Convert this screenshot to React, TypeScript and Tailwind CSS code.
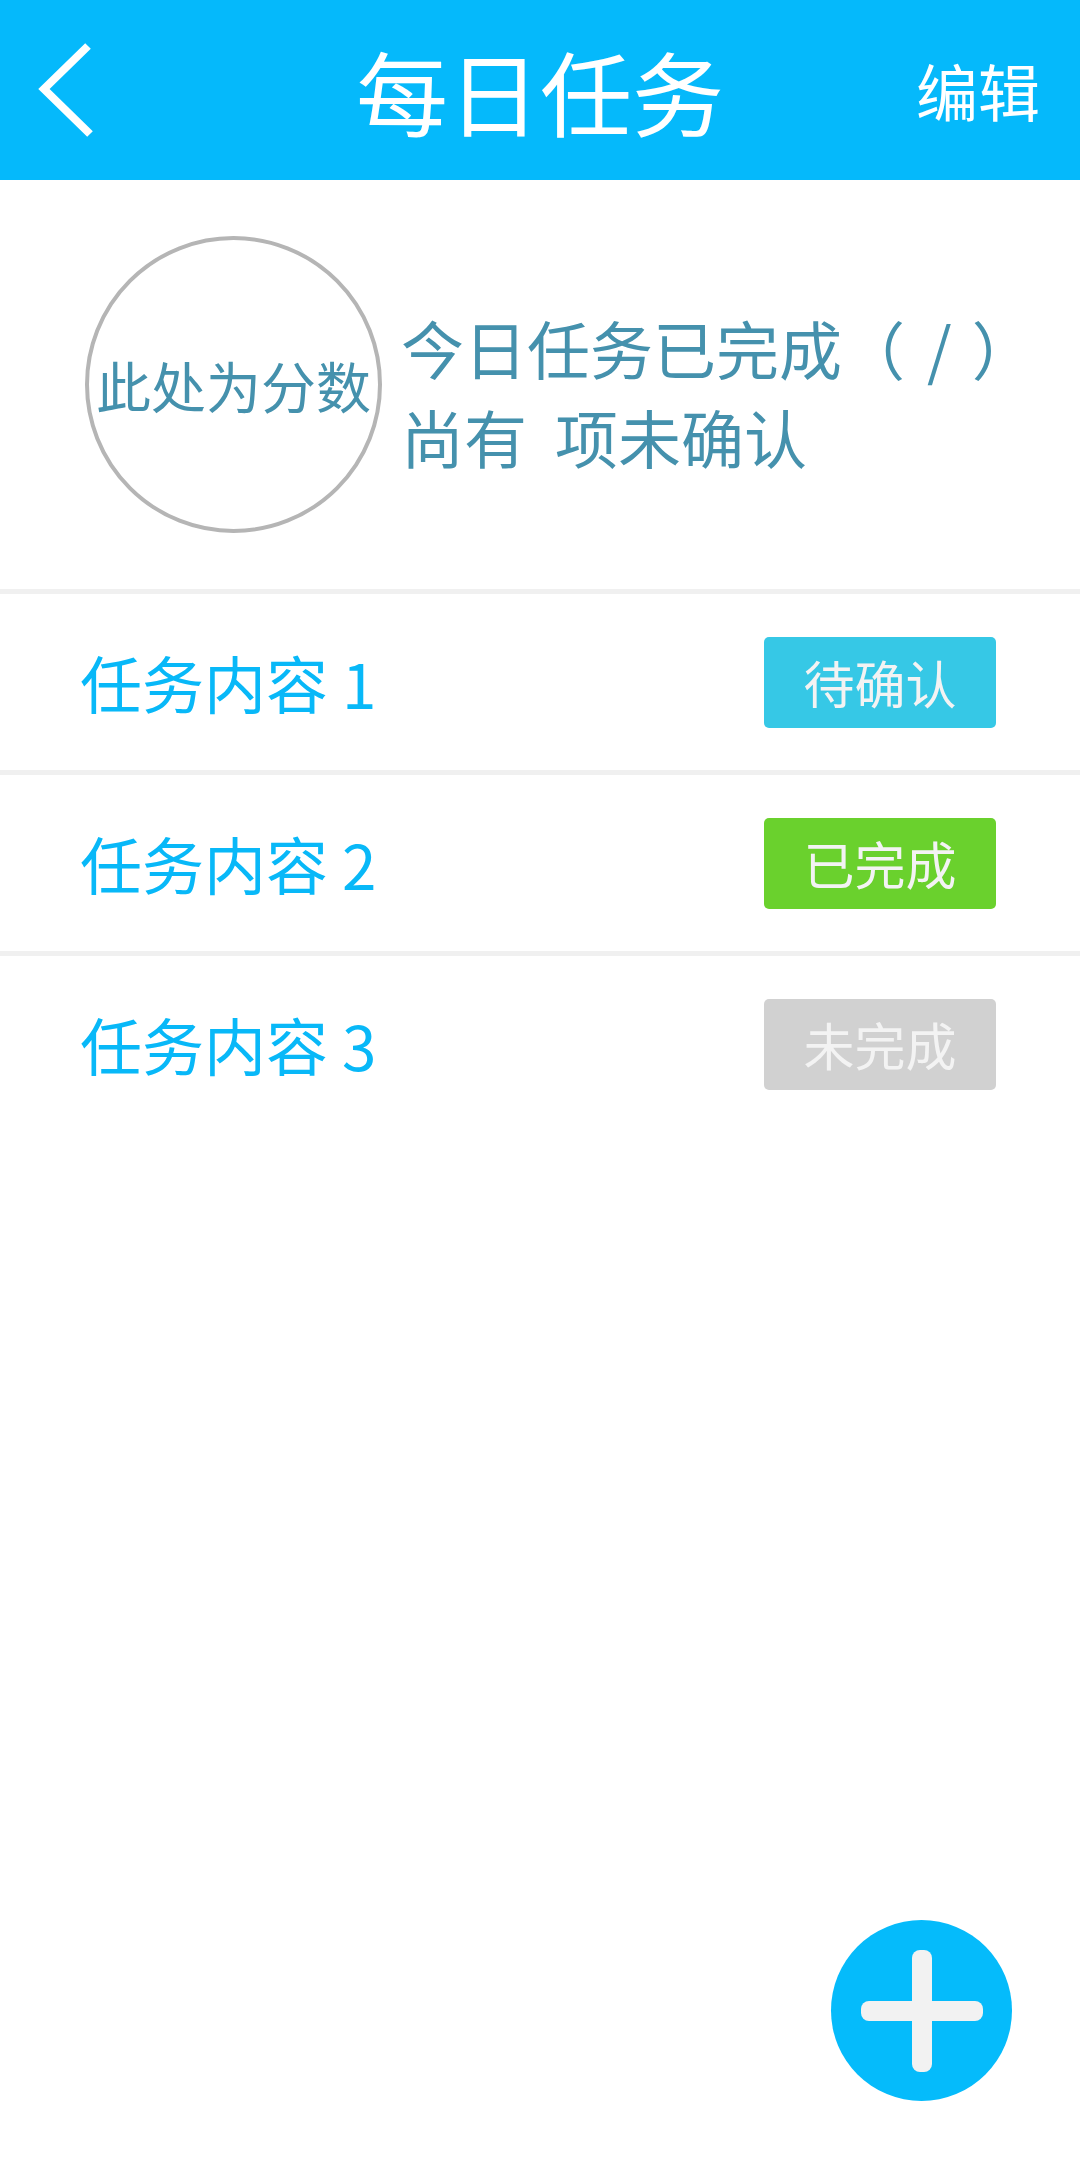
import React from 'react';

type Status = 'pending' | 'done' | 'todo';

interface Task {
  id: number;
  title: string;
  status: Status;
}

const tasks: Task[] = [
  { id: 1, title: '任务内容 1', status: 'pending' },
  { id: 2, title: '任务内容 2', status: 'done' },
  { id: 3, title: '任务内容 3', status: 'todo' },
];

const statusLabel: Record<Status, string> = {
  pending: '待确认',
  done: '已完成',
  todo: '未完成',
};

const statusClass: Record<Status, string> = {
  pending: 'bg-[#36c8e6]',
  done: 'bg-[#6ad12d]',
  todo: 'bg-[#d1d1d1]',
};

function StatusBadge({ status }: { status: Status }) {
  return (
    <div
      className={`flex h-[91px] w-[232px] items-center justify-center rounded-[5px] text-[51px] leading-none text-[#f3f3f3] ${statusClass[status]}`}
    >
      {statusLabel[status]}
    </div>
  );
}

function TaskRow({ task }: { task: Task }) {
  return (
    <div className="flex h-[176px] items-center justify-between pl-[80px] pr-[84px]">
      <span className="text-[62px] leading-none text-[#08b8f8]">{task.title}</span>
      <StatusBadge status={task.status} />
    </div>
  );
}

export default function App() {
  return (
    <div
      className="relative h-[2160px] w-[1080px] overflow-hidden bg-white"
      style={{ fontFamily: '"Noto Sans CJK SC", "Noto Sans", sans-serif' }}
    >
      {/* Header */}
      <header className="grid h-[180px] grid-cols-[1fr_auto_1fr] items-center bg-[#05b9fb] text-white">
        <div className="flex items-center pl-[36px]">
          <svg width="64" height="100" viewBox="0 0 64 100" fill="none">
            <polyline
              points="52,6 8,49 54,94"
              stroke="white"
              strokeWidth="8"
              strokeLinecap="butt"
              strokeLinejoin="miter"
            />
          </svg>
        </div>
        <h1 className="text-[92px] font-normal leading-none">每日任务</h1>
        <div className="flex justify-end pr-[40px]">
          <span className="text-[62px] leading-none">编辑</span>
        </div>
      </header>

      {/* Summary */}
      <section className="flex h-[409px] items-center pl-[85px]">
        <div className="flex h-[297px] w-[297px] shrink-0 items-center justify-center rounded-full border-4 border-[#b5b5b5]">
          <span className="whitespace-nowrap text-[55px] leading-none text-[#4591ad]">此处为分数</span>
        </div>
        <div className="ml-[19px] pt-[12px] text-[63px] leading-[89px] text-[#4591ad]">
          <p className="whitespace-nowrap">
            今日任务已完成（<span className="inline-block w-[22px]" />/<span className="inline-block w-[20px]" />）
          </p>
          <p className="whitespace-nowrap">
            尚有<span className="inline-block w-[28px]" />项未确认
          </p>
        </div>
      </section>

      <div className="h-[5px] bg-[#f0f0f0]" />

      {/* Task list */}
      <div>
        {tasks.map((task, i) => (
          <React.Fragment key={task.id}>
            <TaskRow task={task} />
            {i < tasks.length - 1 && <div className="h-[5px] bg-[#f0f0f0]" />}
          </React.Fragment>
        ))}
      </div>

      {/* Floating add button */}
      <button className="absolute left-[831px] top-[1920px] flex h-[181px] w-[181px] items-center justify-center rounded-full bg-[#05bbfb]">
        <svg width="122" height="122" viewBox="0 0 122 122">
          <rect x="0" y="51" width="122" height="20" rx="8" fill="#f2f2f2" />
          <rect x="51" y="0" width="20" height="122" rx="8" fill="#f2f2f2" />
        </svg>
      </button>
    </div>
  );
}
